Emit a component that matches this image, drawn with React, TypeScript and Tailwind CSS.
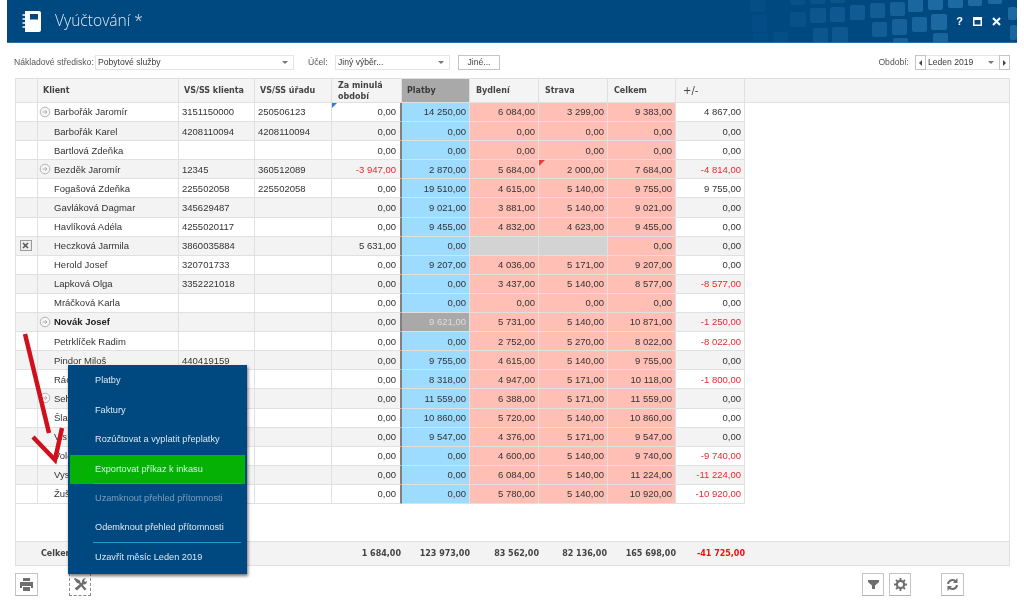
import React from "react";

const W = ["w-[22px]", "w-[141px]", "w-[76px]", "w-[77px]", "w-[70px]", "w-[68px]", "w-[69px]", "w-[69px]", "w-[68px]", "w-[69px]", "flex-1"];
const HP = ["pl-[5px]", "pl-[5px]", "pl-[5px]", "pl-[5px]", "pl-[6px]", "pl-[5px]", "pl-[6px]", "pl-[6px]", "pl-[6px]", "pl-[7px]", "pl-[5px]"];

type Row = { n: string; arrow?: boolean; bold?: boolean; x?: boolean; a?: string; b?: string; v: string[] };
const z = "0,00";
const rows: Row[] = [
  { n: "Barbořák Jaromír", arrow: true, a: "3151150000", b: "250506123", v: [z, "14 250,00", "6 084,00", "3 299,00", "9 383,00", "4 867,00"] },
  { n: "Barbořák Karel", a: "4208110094", b: "4208110094", v: [z, z, z, z, z, z] },
  { n: "Bartlová Zdeňka", v: [z, z, z, z, z, z] },
  { n: "Bezděk Jaromír", arrow: true, a: "12345", b: "360512089", v: ["-3 947,00", "2 870,00", "5 684,00", "2 000,00", "7 684,00", "-4 814,00"] },
  { n: "Fogašová Zdeňka", a: "225502058", b: "225502058", v: [z, "19 510,00", "4 615,00", "5 140,00", "9 755,00", "9 755,00"] },
  { n: "Gavláková Dagmar", a: "345629487", v: [z, "9 021,00", "3 881,00", "5 140,00", "9 021,00", z] },
  { n: "Havlíková Adéla", a: "4255020117", v: [z, "9 455,00", "4 832,00", "4 623,00", "9 455,00", z] },
  { n: "Heczková Jarmila", x: true, a: "3860035884", v: ["5 631,00", z, "", "", z, z] },
  { n: "Herold Josef", a: "320701733", v: [z, "9 207,00", "4 036,00", "5 171,00", "9 207,00", z] },
  { n: "Lapková Olga", a: "3352221018", v: [z, z, "3 437,00", "5 140,00", "8 577,00", "-8 577,00"] },
  { n: "Mráčková Karla", v: [z, z, z, z, z, z] },
  { n: "Novák Josef", arrow: true, bold: true, v: [z, "9 621,00", "5 731,00", "5 140,00", "10 871,00", "-1 250,00"] },
  { n: "Petrklíček Radim", v: [z, z, "2 752,00", "5 270,00", "8 022,00", "-8 022,00"] },
  { n: "Pindor Miloš", a: "440419159", v: [z, "9 755,00", "4 615,00", "5 140,00", "9 755,00", z] },
  { n: "Rác", v: [z, "8 318,00", "4 947,00", "5 171,00", "10 118,00", "-1 800,00"] },
  { n: "Seh", arrow: true, v: [z, "11 559,00", "6 388,00", "5 171,00", "11 559,00", z] },
  { n: "Šlac", v: [z, "10 860,00", "5 720,00", "5 140,00", "10 860,00", z] },
  { n: "Vis", v: [z, "9 547,00", "4 376,00", "5 171,00", "9 547,00", z] },
  { n: "Vold", v: [z, z, "4 600,00", "5 140,00", "9 740,00", "-9 740,00"] },
  { n: "Vyso", v: [z, z, "6 084,00", "5 140,00", "11 224,00", "-11 224,00"] },
  { n: "Žušk", v: [z, z, "5 780,00", "5 140,00", "10 920,00", "-10 920,00"] },
];

// x, y, w, h, opacity of the squares in the title bar's backdrop
const squares: [number, number, number, number, number][] = [
  [908, -3, 15, 15, 0.45], [928, -5, 15, 15, 0.5], [948, -7, 15, 15, 0.5], [968, -9, 14, 15, 0.5], [988, -11, 14, 15, 0.5],
  [790, 12, 16, 15, 0.12], [810, 8, 16, 15, 0.2], [830, 7, 15, 15, 0.24], [850, 5, 15, 15, 0.28], [870, 3, 15, 15, 0.32], [890, 2, 15, 14, 0.38],
  [872, 22, 15, 15, 0.32], [892, 19, 15, 16, 0.38], [912, 17, 15, 15, 0.42], [931, 14, 16, 16, 0.48],
  [813, 28, 15, 15, 0.2], [832, 27, 16, 16, 0.24], [933, 33, 15, 15, 0.42], [893, 38, 15, 15, 0.36],
  [1008, 7, 9, 13, 0.5], [1010, 25, 7, 15, 0.45],
  [750, -3, 15, 15, 0.08], [790, -10, 15, 15, 0.12], [810, -11, 15, 15, 0.16], [830, -12, 15, 15, 0.18],
  [752, 15, 15, 17, 0.07], [753, 33, 15, 15, 0.07], [773, 32, 15, 15, 0.1],
];

function Dot() {
  return (
    <svg width="14" height="14" viewBox="0 0 14 14" className="absolute left-0 top-1/2 -translate-y-1/2">
      <circle cx="7" cy="7" r="4.8" fill="#f6f6f6" stroke="#b4b4b4" />
      <path d="M4.500 7h4.500M7.200 5.200 9 7l-1.800 1.800" fill="none" stroke="#a8a8a8" strokeWidth="0.9" />
    </svg>
  );
}

function ToolButton({ children, dashed, cls }: { children: React.ReactNode; dashed?: boolean; cls: string }) {
  return (
    <div className={`h-[23px] flex items-center justify-center bg-white border ${dashed ? "border-dashed border-[#8a8a8a]" : "border-[#c4c4c4] border-b-[#b0b0b0]"} ${cls}`}>
      {children}
    </div>
  );
}

function Combo({ cls, text }: { cls: string; text: string }) {
  return (
    <div className={`h-[15px] shrink-0 flex items-center justify-between border border-[#e4e4e4] pl-[2px] pr-[5px] text-[#3a3a3a] ${cls}`}>
      <span>{text}</span>
      <span className="w-0 h-0 border-x-[3px] border-x-transparent border-t-[3px] border-t-[#777]" />
    </div>
  );
}

const menu = [
  "Platby",
  "Faktury",
  "Rozúčtovat a vyplatit přeplatky",
  "Exportovat příkaz k inkasu",
  "Uzamknout přehled přítomnosti",
  "Odemknout přehled přítomnosti",
  "Uzavřít měsíc Leden 2019",
];

export default function App() {
  return (
    <div className="relative w-[1024px] h-[610px] overflow-hidden bg-white blur-[0.3px] font-['Liberation_Sans',sans-serif] text-[9.5px] text-[#333]">
      <header className="relative ml-[7px] mr-[7px] h-[43px] bg-[#004880] border-b border-[#2a6fa6] text-white overflow-hidden flex items-center">
        <svg className="absolute left-[-7px] top-0" width="1024" height="43" viewBox="0 0 1024 43">
          {squares.map(([x, y, w, h, o], i) => (
            <rect key={i} x={x} y={y} width={w} height={h} rx="2" fill="#3a8cc4" opacity={o} />
          ))}
        </svg>
        <svg className="relative ml-[15px]" width="20" height="23" viewBox="0 0 20 23">
          <path d="M3 1h14a2 2 0 0 1 2 2v17a2 2 0 0 1-2 2H3z" fill="#fff" />
          <rect x="8" y="4" width="8" height="5.500" fill="#004880" />
          <path d="M0.500 5h4M0.500 9h4M0.500 13h4M0.500 17h4" stroke="#fff" strokeWidth="1.500" />
        </svg>
        <h1 className="relative ml-[13px] text-[15.6px] leading-none font-['Open_Sans',sans-serif] font-light text-[#dfe9f2]">Vyúčtování *</h1>
        <div className="relative ml-auto mr-[16px] flex items-center text-white">
          <span className="text-[11px] font-bold leading-none">?</span>
          <svg className="ml-[10px]" width="9" height="9" viewBox="0 0 9 9"><path d="M0 0h9v9H0z" fill="#fff" /><path d="M1.500 3h6v4.500h-6z" fill="#004880" /></svg>
          <svg className="ml-[10px]" width="9" height="9" viewBox="0 0 9 9"><path d="M1 1l7 7M8 1L1 8" stroke="#fff" strokeWidth="2" /></svg>
        </div>
      </header>

      <div className="h-[35px] ml-[14px] mr-[14px] pt-[12px] flex items-start text-[8.6px]">
        <span className="w-[81px] shrink-0 whitespace-nowrap leading-[15px] text-[#555]">Nákladové středisko:</span>
        <Combo cls="w-[199px]" text="Pobytové služby" />
        <span className="ml-[14px] w-[27px] shrink-0 leading-[15px] text-[#555]">Účel:</span>
        <Combo cls="w-[115px]" text="Jiný výběr..." />
        <div className="ml-[8px] w-[42px] h-[15px] flex items-center justify-center border border-[#c4c4c4] text-[#444]">Jiné...</div>
        <span className="ml-auto mr-[6px] leading-[15px] text-[#555]">Období:</span>
        <div className="w-[11px] h-[15px] flex items-center justify-center border border-[#c4c4c4]">
          <span className="w-0 h-0 border-y-[3px] border-y-transparent border-r-[3px] border-r-[#444]" />
        </div>
        <Combo cls="w-[73px] border-x-0" text="Leden 2019" />
        <div className="w-[11px] h-[15px] flex items-center justify-center border border-[#c4c4c4]">
          <span className="w-0 h-0 border-y-[3px] border-y-transparent border-l-[3px] border-l-[#444]" />
        </div>
      </div>

      <main className="ml-[15px] w-[995px] h-[488px] flex flex-col border-x border-[#e0e0e0]">
        <div className="h-[25px] shrink-0 flex bg-[#f4f4f4] border-y border-[#e0e0e0] font-['DejaVu_Sans',sans-serif] font-bold text-[8px] text-[#444]">
          {["", "Klient", "VS/SS klienta", "VS/SS úřadu", "Za minulá období", "Platby", "Bydlení", "Strava", "Celkem", "+/-", ""].map((h, i) => (
            <div
              key={i}
              className={`${W[i]} ${i === 10 ? "" : "shrink-0 border-r"} ${HP[i]} flex items-center leading-[11px] border-[#e0e0e0] ${i === 5 ? "bg-[#a9a9a9] text-[#3a3a3a]" : ""} ${i === 9 ? "font-normal text-[10px]" : ""}`}
            >
              {h}
            </div>
          ))}
        </div>

        <div className="h-[401px] shrink-0 flex flex-col">
          {rows.map((r, ri) => (
            <div key={ri} className={`flex-1 flex ${ri % 2 ? "bg-[#f3f3f3]" : "bg-white"}`}>
              <div className={`${W[0]} shrink-0 flex items-center justify-center border-r border-b border-[#e0e0e0]`}>
                {r.x && (
                  <span className="relative right-px w-[12px] h-[11px] flex items-center justify-center border border-[#9a9a9a] bg-[#eee]">
                    <svg width="7" height="7" viewBox="0 0 7 7"><path d="M1 1l5 5M6 1L1 6" stroke="#555" strokeWidth="1.500" /></svg>
                  </span>
                )}
              </div>
              <div className={`${W[1]} shrink-0 relative flex items-center pt-px pl-[16px] border-r border-b border-[#e0e0e0] ${r.bold ? "font-bold text-[#222]" : ""}`}>
                {r.arrow && <Dot />}
                {r.n}
              </div>
              <div className={`${W[2]} shrink-0 flex items-center pt-px pl-[3px] border-r border-b border-[#e0e0e0]`}>{r.a}</div>
              <div className={`${W[3]} shrink-0 flex items-center pt-px pl-[3px] border-r border-b border-[#e0e0e0]`}>{r.b}</div>
              {r.v.map((v, i) => {
                const isEmpty = v === "";
                const grey = ri === 11 && i === 1;
                const bg = i === 0 || i === 5 ? "" : i === 1 ? (grey ? "bg-[#a9a9a9] text-[#ddd]" : "bg-[#9edcff]") : isEmpty ? "bg-[#d3d3d3]" : "bg-[#ffbfb5]";
                const red = v.startsWith("-") ? "text-[#f5222d]" : "";
                return (
                  <div
                    key={i}
                    className={`${W[4 + i]} shrink-0 relative flex items-center justify-end pt-px border-b ${i === 0 ? "pr-[4px] border-r-2 border-r-[#808080]" : "pr-[3px] border-r"} border-[#e0e0e0] ${i === 0 ? "border-r-[#808080]" : ""} ${isEmpty ? "border-[#d3d3d3]" : ""} ${bg} ${red}`}
                  >
                    {ri === 0 && i === 0 && <span className="absolute left-0 top-0 w-0 h-0 border-r-[5px] border-r-transparent border-t-[5px] border-t-[#2a7fd4]" />}
                    {ri === 3 && i === 3 && <span className="absolute left-0 top-0 w-0 h-0 border-r-[6px] border-r-transparent border-t-[6px] border-t-[#f03a3a]" />}
                    {v}
                  </div>
                );
              })}
              <div className="flex-1 bg-white" />
            </div>
          ))}
        </div>

        <div className="mt-auto h-[25px] shrink-0 flex items-center bg-[#f3f3f3] border-y border-[#e0e0e0] font-['DejaVu_Sans',sans-serif] font-bold text-[8px] text-[#444]">
          <div className="w-[240px] shrink-0 pl-[25px]">Celkem</div>
          {[["w-[145px]", "1 684,00"], ["w-[69px]", "123 973,00"], ["w-[69px]", "83 562,00"], ["w-[68px]", "82 136,00"], ["w-[69px]", "165 698,00"], ["w-[69px]", "-41 725,00"]].map(([w, t], i) => (
            <div key={i} className={`${w} shrink-0 text-right ${i === 5 ? "text-[#f01010]" : ""}`}>{t}</div>
          ))}
        </div>
      </main>

      <footer className="ml-[15px] w-[949px] mt-[7px] flex">
        <ToolButton cls="w-[23px]">
          <svg width="13" height="13" viewBox="0 0 13 13"><path d="M3 0h7v3H3zM0 4h13v6h-2V8H2v2H0zM3 9h7v4H3z" fill="#6e6e6e" /></svg>
        </ToolButton>
        <ToolButton dashed cls="ml-[31px] w-[22px]">
          <svg width="15" height="15" viewBox="0 0 15 15">
            <path d="M2 1 1 2l3 4 2 .5 5.500 7 2-1.500-6-6.500L7 3.500z" fill="#6e6e6e" />
            <path d="M9 5.500C8.500 3 10 1 13 1.200l-2 2 1 1.800 2-1c.3 2.500-1.800 4-3.800 3.500L4 13.500 1.500 11.500z" fill="#6e6e6e" />
          </svg>
        </ToolButton>
        <ToolButton cls="ml-auto w-[22px]">
          <svg width="11" height="11" viewBox="0 0 11 11"><path d="M0 1h11v2L7 6.500V10H4V6.500L0 3z" fill="#6e6e6e" /></svg>
        </ToolButton>
        <ToolButton cls="ml-[5px] w-[22px]">
          <svg width="13" height="13" viewBox="0 0 13 13">
            <circle cx="6.500" cy="6.500" r="3.600" fill="none" stroke="#6e6e6e" strokeWidth="2.200" />
            <path d="M6.500 0v13M0 6.500h13M2 2l9 9M11 2l-9 9" stroke="#6e6e6e" strokeWidth="1.800" strokeDasharray="2.600 7.800" />
          </svg>
        </ToolButton>
        <ToolButton cls="ml-[30px] w-[23px]">
          <svg width="13" height="13" viewBox="0 0 13 13">
            <path d="M2 6a4.600 4.600 0 0 1 8-2.400M11 7a4.600 4.600 0 0 1-8 2.400" fill="none" stroke="#6e6e6e" strokeWidth="2" />
            <path d="M11.500 0v5h-4.500zM1.500 13V8h4.500z" fill="#6e6e6e" />
          </svg>
        </ToolButton>
      </footer>

      <svg className="absolute left-0 top-0 pointer-events-none" width="80" height="480" viewBox="0 0 80 480">
        <path d="M25 334 49 433" stroke="#d0101c" strokeWidth="4.500" fill="none" />
        <path d="M33 437 55 460 62 428" stroke="#d0101c" strokeWidth="4.500" fill="none" />
      </svg>

      <nav className="absolute left-[68px] top-[365px] w-[179px] h-[209px] bg-[#004880] pt-[1.6px] shadow-[1px_2px_3px_rgba(0,0,0,0.55)] text-[9.2px] text-[#dce8f0]">
        {menu.map((m, i) => (
          <div key={i}>
            <div className={`h-[29.4px] flex items-center ${i === 3 ? "mx-[2px] pl-[25px] bg-[#06b106]" : "pl-[27px]"} ${i === 4 ? "text-[#7d9db8]" : ""}`}>{m}</div>
            {(i === 3 || i === 5) && <div className="-mt-px ml-[25px] mr-[6px] h-px bg-[#1b9ad6]" />}
          </div>
        ))}
      </nav>
    </div>
  );
}
